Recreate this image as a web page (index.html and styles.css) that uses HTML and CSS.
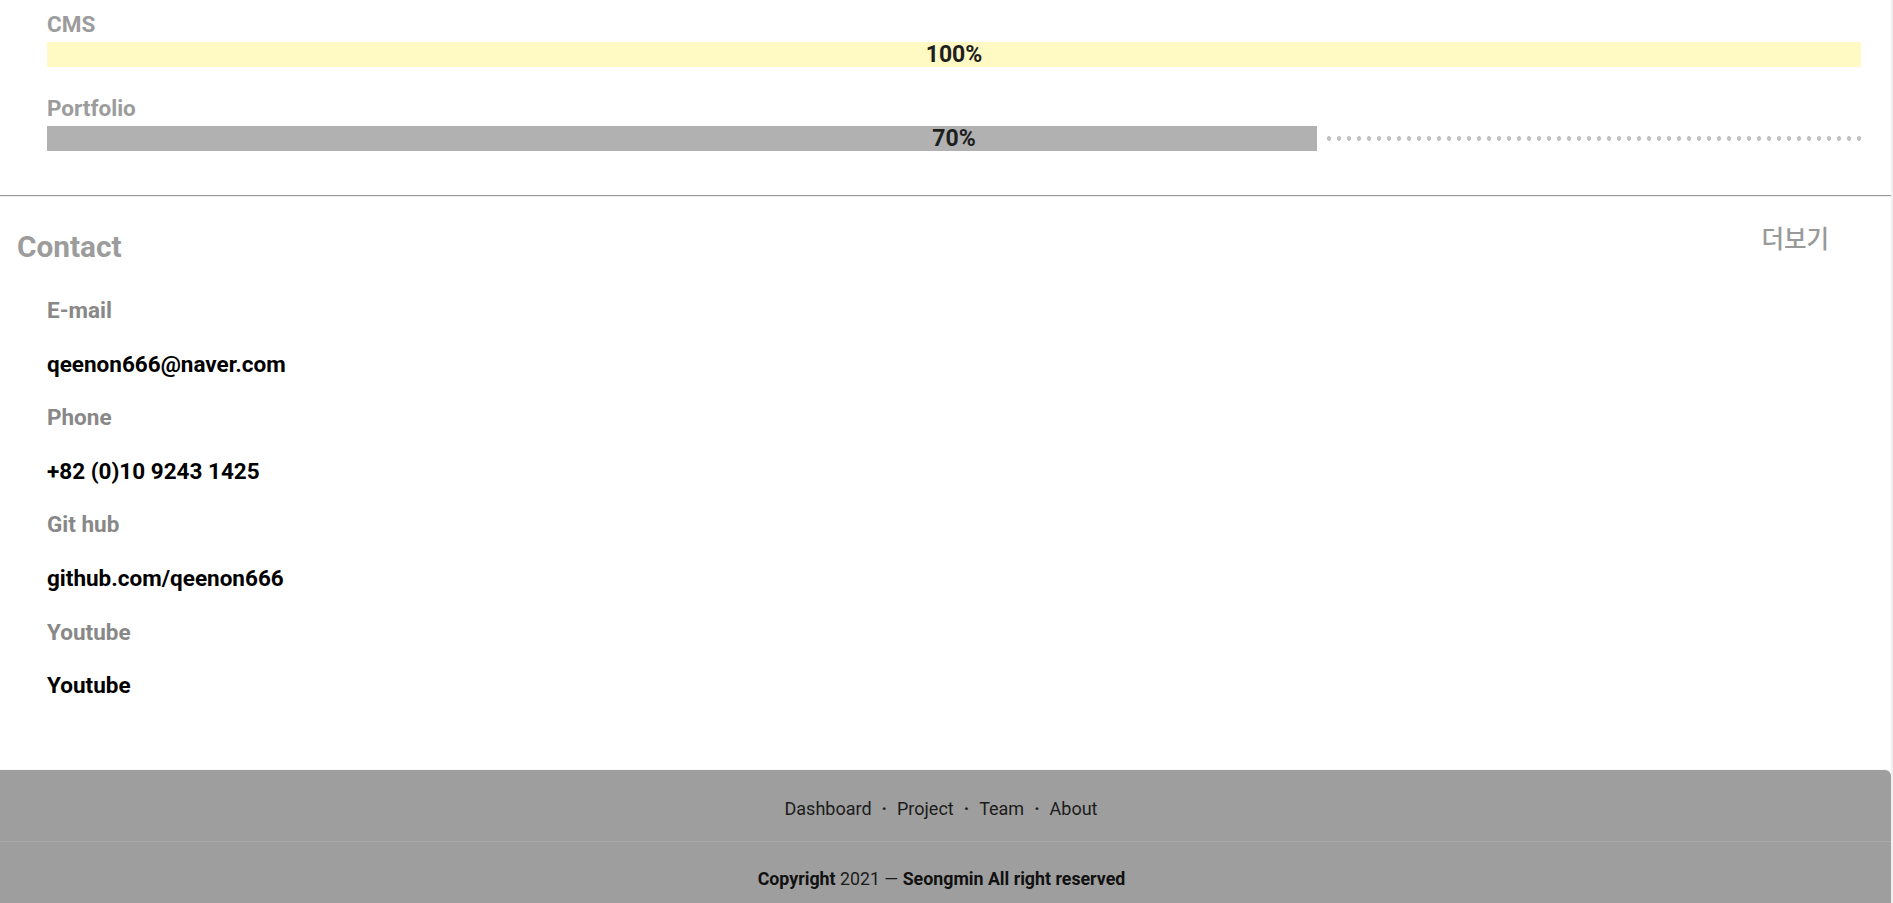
FILE: index.html
```html
<!DOCTYPE html>
<html lang="ko">
<head>
<meta charset="utf-8">
<title>Portfolio - Contact</title>
<link rel="stylesheet" href="styles.css">
</head>
<body>
<div class="page">
  <section class="skills">
    <div class="skill">
      <div class="skill-name">CMS</div>
      <div class="track">
        <div class="fill fill-yellow" style="width:100%"></div>
        <div class="rest"></div>
        <span class="pct">100%</span>
      </div>
    </div>
    <div class="skill">
      <div class="skill-name">Portfolio</div>
      <div class="track">
        <div class="fill fill-gray" style="width:70%"></div>
        <div class="rest"></div>
        <span class="pct">70%</span>
      </div>
    </div>
  </section>
  <hr class="divider">
  <section class="contact">
    <div class="contact-head">
      <h2 class="contact-title">Contact</h2>
      <a class="more">더보기</a>
    </div>
    <dl class="contact-list">
      <dt>E-mail</dt>
      <dd>qeenon666@naver.com</dd>
      <dt>Phone</dt>
      <dd>+82 (0)10 9243 1425</dd>
      <dt>Git hub</dt>
      <dd>github.com/qeenon666</dd>
      <dt>Youtube</dt>
      <dd>Youtube</dd>
    </dl>
  </section>
  <footer class="footer">
    <nav class="footer-nav">
      <a>Dashboard</a><span class="sep">·</span><a>Project</a><span class="sep">·</span><a>Team</a><span class="sep">·</span><a>About</a>
    </nav>
    <div class="copyright">
      <p class="copy-text"><b>Copyright</b> 2021 — <b>Seongmin All right reserved</b></p>
    </div>
  </footer>
</div>
</body>
</html>
```
FILE: styles.css
```css
html {
  background: #f0f0f0;
}
body {
  margin: 0 2px 0 0;
  background: #fff;
  font-family: Roboto, "Noto Sans CJK KR", sans-serif;
  color: #000;
}
.page {
  display: flex;
  flex-direction: column;
}
.skills {
  padding: 10px 30px 44px 47px;
  display: flex;
  flex-direction: column;
  gap: 27px;
}
.skill {
  display: flex;
  flex-direction: column;
  gap: 4px;
}
.skill-name {
  font-size: 22.5px;
  font-weight: 700;
  line-height: 28px;
  color: #9c9c9c;
}
.track {
  position: relative;
  height: 25px;
  display: flex;
  align-items: center;
}
.fill {
  height: 25px;
  flex: none;
}
.fill-yellow { background: #fff9c4; }
.fill-gray { background: #b1b1b1; }
.rest {
  flex: 1;
  height: 5px;
  margin-left: 7px;
  background-image: radial-gradient(circle, #c2c2c2 2px, transparent 2.6px);
  background-size: 10px 5px;
  background-repeat: repeat-x;
  background-position: 0 0;
}
.pct {
  position: absolute;
  left: 0;
  right: 0;
  top: 0;
  text-align: center;
  font-size: 23px;
  font-weight: 700;
  line-height: 25px;
  color: #1e1e1e;
}
.divider {
  margin: 0;
  height: 0;
  border: 0;
  border-top: 1px solid #9a9a9a;
  border-bottom: 1px solid #eeeeee;
}
.contact {
  padding: 33px 0 72px 0;
}
.contact-head {
  display: flex;
  justify-content: space-between;
  align-items: flex-start;
  padding: 0 62px 0 17px;
}
.contact-title {
  margin: 0;
  font-size: 29.8px;
  font-weight: 700;
  line-height: 33px;
  color: #9c9c9c;
}
.more {
  font-family: "Noto Sans CJK KR", sans-serif;
  font-size: 24.5px;
  font-weight: 500;
  line-height: 26px;
  color: #999999;
  margin-top: -5px;
}
.contact-list {
  margin: 34px 0 0 0;
  padding: 0 0 0 47px;
  display: flex;
  flex-direction: column;
  gap: 27.6px;
}
.contact-list dt,
.contact-list dd {
  margin: 0;
  font-size: 22.5px;
  line-height: 26px;
  font-weight: 700;
}
.contact-list dt {
  color: #888888;
}
.contact-list dd {
  color: #000;
}
.footer {
  background: #9e9e9e;
  border-top-right-radius: 6px;
  box-shadow: 0 -1px 0 #f7f7f7;
  color: #1c1c1c;
}
.footer-nav {
  height: 72px;
  box-sizing: border-box;
  padding: 6px 9px 0 0;
  display: flex;
  justify-content: center;
  align-items: center;
  font-size: 18px;
  border-bottom: 1px solid #a9a9a9;
}
.sep {
  margin: 0 10px;
  font-weight: 700;
}
.copyright {
  height: 70px;
  box-sizing: border-box;
  padding: 2px 8px 0 0;
  display: flex;
  justify-content: center;
  align-items: center;
}
.copy-text {
  margin: 0;
  font-size: 17.8px;
}
.copy-text b {
  font-weight: 700;
  color: #111;
}
```
